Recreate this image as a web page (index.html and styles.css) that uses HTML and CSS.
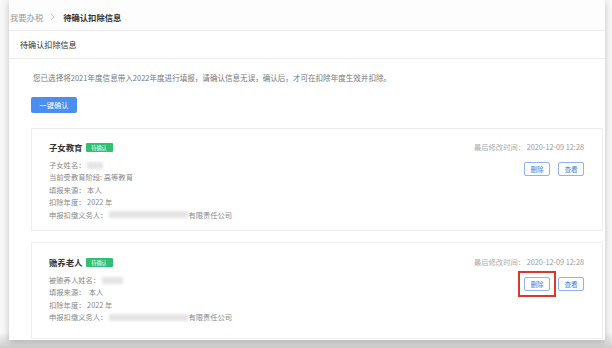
FILE: index.html
```
<!DOCTYPE html>
<html lang="zh-CN">
<head>
  <meta charset="UTF-8">
  <title>待确认扣除信息</title>
  <link rel="stylesheet" href="styles.css">
</head>
<body>
  <div class="window">
    <!-- Breadcrumb -->
    <div class="crumbs">
      <span class="crumb-link">我要办税</span>
      <svg class="crumb-sep" width="5" height="8" viewBox="0 0 5 8"><polyline points="1,1 4,4 1,7" fill="none" stroke="#b5b5b5" stroke-width="0.8"/></svg>
      <span class="crumb-current">待确认扣除信息</span>
    </div>

    <div class="tabbar">待确认扣除信息</div>

    <div class="content">
      <p class="notice">您已选择将2021年度信息带入2022年度进行填报，请确认信息无误，确认后，才可在扣除年度生效并扣除。</p>
      <button class="btn-primary">一键确认</button>

      <!-- Card: 子女教育 -->
      <div class="card">
        <div class="info">
          <div class="card-title">子女教育<span class="tag">待确认</span></div>
          <div class="row">子女姓名：<span class="blur" style="width:16px"></span></div>
          <div class="row">当前受教育阶段: 高等教育</div>
          <div class="row">填报来源：&nbsp;本人</div>
          <div class="row">扣除年度：&nbsp;2022 年</div>
          <div class="row">申报扣缴义务人：<span class="blur" style="width:79px"></span>有限责任公司</div>
        </div>
        <div class="side">
          <div class="time">最后修改时间：&nbsp;<span>2020-12-09 12:28</span></div>
          <div class="actions">
            <button class="btn-line">删除</button>
            <button class="btn-line">查看</button>
          </div>
        </div>
      </div>

      <!-- Card: 赡养老人 -->
      <div class="card card-last">
        <div class="info">
          <div class="card-title">赡养老人<span class="tag">待确认</span></div>
          <div class="row">被赡养人姓名：<span class="blur" style="width:21px"></span></div>
          <div class="row">填报来源：&nbsp;&nbsp;本人</div>
          <div class="row">扣除年度：&nbsp;2022 年</div>
          <div class="row">申报扣缴义务人：<span class="blur" style="width:79px"></span>有限责任公司</div>
        </div>
        <div class="side">
          <div class="time">最后修改时间：&nbsp;<span>2020-12-09 12:28</span></div>
          <div class="actions">
            <button class="btn-line marked">删除</button>
            <button class="btn-line">查看</button>
          </div>
        </div>
      </div>
    </div>
  </div>
</body>
</html>
```

FILE: styles.css
```
/* Page */
body {
  margin: 0;
  font-family: "Noto Sans CJK SC", "Noto Sans", sans-serif;
  background: linear-gradient(#f8f8f8 0, #f8f8f8 332px, #cdcdcd 348px);
  height: 348px;
  overflow: hidden;
  color: #333;
}

.window {
  margin-left: 9px;
  width: 596px;
  height: 340px;
  background: #fff;
  box-shadow: 0 2px 7px rgba(0, 0, 0, 0.22);
  overflow: hidden;
}

/* Breadcrumb */
.crumbs {
  height: 26px;
  padding-top: 4px;
  display: flex;
  align-items: center;
  padding-left: 1px;
  font-size: 8.3px;
  border-bottom: 1px solid #ededf0;
  background: #fdfdfd;
}

.crumb-link {
  color: #999;
}

.crumb-sep {
  margin: 0 8px 0 7px;
}

.crumb-current {
  color: #333;
  font-weight: bold;
}

.tabbar {
  height: 27px;
  line-height: 27px;
  padding-left: 11px;
  font-size: 8.1px;
  color: #333;
  border-bottom: 1px solid #ededf0;
}

/* Content */
.content {
  padding: 0 2px 0 22px;
}

.notice {
  margin: 14px 0 0 2px;
  font-size: 7.55px;
  line-height: 10px;
  color: #777;
}

.btn-primary {
  display: block;
  margin-top: 14px;
  width: 46px;
  height: 16px;
  padding: 0;
  border: none;
  border-radius: 2px;
  background: #4a8ff0;
  color: #fff;
  font-family: inherit;
  font-size: 7.2px;
}

/* Cards */
.card {
  margin-top: 15px;
  display: flex;
  justify-content: space-between;
  border: 1px solid #eeeef1;
  padding: 12px 18px 9px 17px;
}

.card + .card {
  margin-top: 11px;
  padding-top: 13px;
}

.card-last {
  padding-bottom: 14px;
}

.card-title {
  display: flex;
  align-items: center;
  height: 12px;
  font-size: 8.4px;
  font-weight: bold;
  color: #333;
  margin-bottom: 6px;
}

.tag {
  margin-left: 3px;
  width: 27px;
  height: 9px;
  line-height: 9px;
  background: #30c072;
  color: #fff;
  font-size: 5.2px;
  font-weight: normal;
  text-align: center;
  border-radius: 1px;
}

.row {
  display: flex;
  align-items: center;
  font-size: 7.3px;
  line-height: 12.4px;
  color: #888;
}

.blur {
  display: inline-block;
  height: 7px;
  background: #e4e4e4;
  filter: blur(1.4px);
  margin-left: 2px;
}

.side {
  display: flex;
  flex-direction: column;
  align-items: flex-end;
}

.time {
  height: 12px;
  line-height: 12px;
  font-size: 7.3px;
  color: #ababab;
}

.time span {
  color: #9a9a9a;
}

.actions {
  display: flex;
  gap: 8px;
  margin-top: 9px;
}

.btn-line {
  position: relative;
  width: 26px;
  height: 14px;
  padding: 0;
  border: 1px solid #8fb3ea;
  border-radius: 2px;
  background: #fff;
  color: #3e7fdc;
  font-family: inherit;
  font-size: 6.6px;
}

/* red annotation frame around the button */
.btn-line.marked::after {
  content: "";
  position: absolute;
  left: -7px;
  right: -7px;
  top: -7px;
  bottom: -7px;
  border: 2px solid #d8392b;
}
```
